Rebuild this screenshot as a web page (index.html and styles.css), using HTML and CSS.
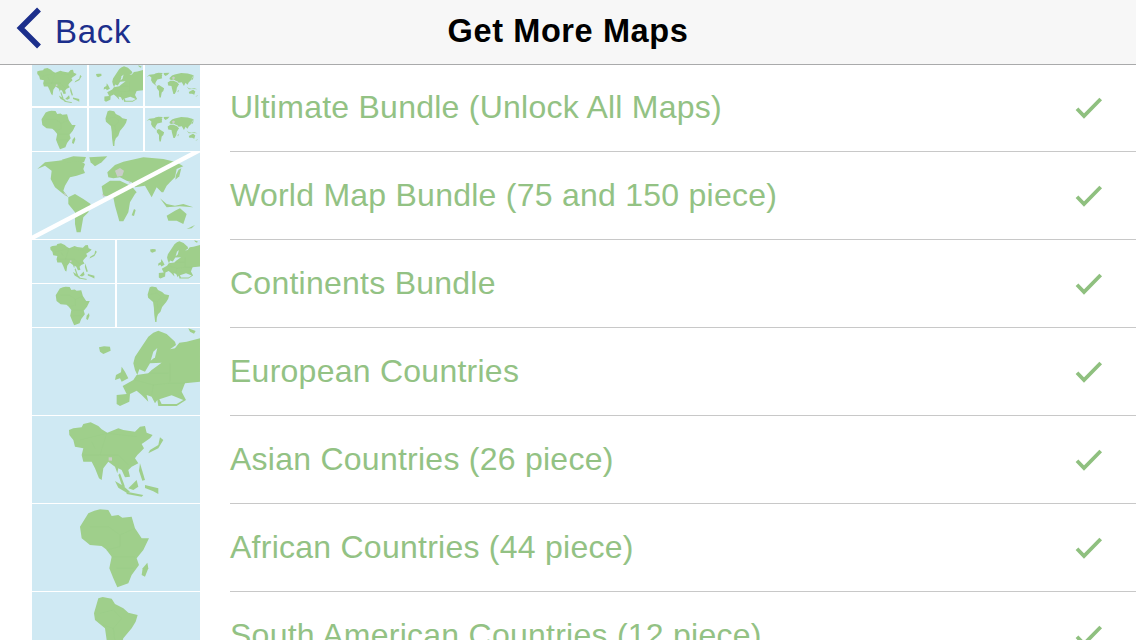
FILE: index.html
```html
<!DOCTYPE html>
<html lang="en">

<head>
    <meta charset="UTF-8">
    <meta name="viewport" content="width=device-width, initial-scale=1.0">
    <title>Get More Maps</title>
    <link rel="stylesheet" href="styles.css">
</head>

<body>
    <svg class="sprite" aria-hidden="true">
        <defs>
            <!-- map shapes are traced in the 3x crop coordinates, hence the scale -->
            <g id="africa" transform="translate(-12,-4) scale(.3333)">
                <path d="M205 40L223 32L240 28L265 30L275 48L295 45L307 53L335 50L345 85L365 115H387L370 150L350 175L357 195L335 225L325 250L292 262L280 235L268 205L275 170L258 148L245 138L210 135L185 115L180 80Z"/>
                <path d="M382 188L385 205L375 230L365 225L368 205Z"/>
                <path class="border" d="M210 80H265L300 105V140L260 150M300 105L345 85M275 170H345M290 205H340"/>
            </g>
            <g id="samerica" transform="translate(-12,-92) scale(.3333)">
                <path d="M222 340L235 295L248 291L275 296L285 312L310 325L325 338L353 345L347 365L335 385L310 415L300 445L285 460L278 480L276 507L268 507L262 460L260 420L255 385L225 360Z"/>
                <path class="border" d="M240 340L280 330L305 355L280 385L250 375M280 385L285 425"/>
            </g>
            <g id="europe" transform="translate(-12,-8) scale(.3333)">
                <path d="M340 130L345 110L365 80L385 50L400 38L415 32L440 42L465 65L468 75L450 88L465 85L478 68L500 65L540 55V185L495 190L485 215L498 240L470 258L415 258L412 240L405 250L395 230L380 225L385 245L365 225L350 212L330 222L328 245L300 258L290 252V225L320 222L308 198L340 180L350 165L385 160L395 150L425 128L390 130L375 155L358 148L352 165L345 150Z"/>
                <path d="M237 82L252 79L270 80L272 92L250 102L240 95Z"/>
                <path d="M305 140L315 155L325 175L305 185L300 175L285 180L288 165L303 157Z"/>
                <path d="M505 25L527 33L522 41L510 35Z"/>
                <path class="sea" d="M418 238L455 226L490 240L470 252L425 252Z"/>
                <path class="sea" d="M392 122L400 95L412 84L405 112Z"/>
                <path class="border" d="M345 180L400 195L445 190L495 190M400 195L395 225M450 130V185M385 160H445"/>
            </g>
            <g id="asia" transform="translate(-12,-96) scale(.3333)">
                <path d="M147 330L160 325L185 322L190 312L212 307L235 318L245 328L262 338L295 325L310 330L345 335L360 320L375 318L380 338L398 345L390 355L375 365L365 372L372 385L362 395L352 405L345 415L355 430L335 440L325 450L330 470L315 472L305 450L295 445L292 460L285 440L265 425L250 445L245 480L237 475L225 445L215 425L190 425L185 405L190 385L165 380L160 360L148 345Z"/>
                <path d="M420 352L430 360L415 385L385 400L390 390L415 375Z"/>
                <path d="M285 483L310 498L330 515L320 518L295 503Z"/>
                <path d="M325 505L350 480L355 500L340 510Z"/>
                <path d="M320 515L370 525L365 530L320 522Z"/>
                <path d="M360 430L375 480L367 482L357 452Z"/>
                <path d="M375 495L415 505V522L400 514L375 504Z"/>
                <path d="M300 460L315 500H307L295 465Z"/>
                <path class="grey" d="M266 412H276V422H266Z"/>
                <path class="border" d="M180 360L260 340L350 350M260 340L240 405M190 405H240M240 405H295L325 435M215 365L225 385"/>
            </g>
            <g id="world" transform="translate(-12,-3) scale(.3333)">
                <path d="M52 60L75 40L115 35L150 30L165 25L195 45L190 60L195 72L170 80L150 85L135 110L130 125L145 145L130 135L105 115L92 90L95 65L75 50Z"/>
                <path d="M125 32L160 22L198 24L192 40L165 38L140 40Z"/>
                <path d="M208 25L262 22L245 40L225 52L212 40Z"/>
                <path d="M145 145L165 135L190 150L212 165L205 190L190 205L182 250H170L165 225V190L145 165Z"/>
                <path d="M262 70L285 48L310 38L370 25L430 30L470 40L490 52L470 60L465 85L450 100L440 110L430 130H425L410 115L395 145L375 110L345 115L335 100L320 95L300 85L280 88L265 85Z"/>
                <path d="M476 62L484 58L478 82L466 92L468 78Z"/>
                <path d="M245 112L270 95H300L335 112L350 130L345 135L330 160L325 190L310 217H298L285 170L280 145L250 140Z"/>
                <path d="M342 180L347 183L342 201L335 199Z"/>
                <path d="M440 200L465 185L480 178L500 195L490 225L470 215L445 215Z"/>
                <path d="M420 148L440 165L465 170L490 165L520 175L480 172L440 175Z"/>
                <path d="M500 240L525 228L515 238Z"/>
                <path class="grey" d="M285 65L300 57L312 65L307 80L292 83ZM245 132L255 142L250 145ZM325 95L333 100L328 103ZM130 130L140 138L135 141Z"/>
            </g>
        </defs>
    </svg>

    <header class="nav-bar">
        <a class="back-link">
            <svg class="back-icon" viewBox="0 0 48 64"><path d="M39 9.500L20.500 28L39 46.500"/></svg>
            <span>Back</span>
        </a>
        <h1 class="nav-title">Get More Maps</h1>
    </header>

    <main class="map-list">
        <div class="map-row">
            <div class="thumb thumb-bundle">
                <svg viewBox="0 0 168 87" preserveAspectRatio="xMidYMid slice"><use href="#asia"/></svg>
                <svg viewBox="0 0 168 87" preserveAspectRatio="xMaxYMid slice"><use href="#europe"/></svg>
                <svg viewBox="0 0 168 87" preserveAspectRatio="xMidYMid meet"><use href="#world"/></svg>
                <svg viewBox="0 0 168 87" preserveAspectRatio="xMidYMid slice"><use href="#africa"/></svg>
                <svg viewBox="0 0 168 87" preserveAspectRatio="xMidYMid slice"><use href="#samerica"/></svg>
                <svg viewBox="0 0 168 87" preserveAspectRatio="xMidYMid meet"><use href="#world"/></svg>
            </div>
            <div class="row-body">
                <span class="row-label">Ultimate Bundle (Unlock All Maps)</span>
                <svg class="check" viewBox="0 0 30 24"><path d="M3 12.800L10 20L26.700 3"/></svg>
            </div>
        </div>

        <div class="map-row">
            <div class="thumb">
                <svg viewBox="0 0 168 87">
                    <use href="#world"/>
                    <path class="slash" d="M-2 87L170 -3"/>
                </svg>
            </div>
            <div class="row-body">
                <span class="row-label">World Map Bundle (75 and 150 piece)</span>
                <svg class="check" viewBox="0 0 30 24"><path d="M3 12.800L10 20L26.700 3"/></svg>
            </div>
        </div>

        <div class="map-row">
            <div class="thumb thumb-continents">
                <svg viewBox="0 0 168 87"><use href="#asia"/></svg>
                <svg viewBox="0 0 168 87"><use href="#europe"/></svg>
                <svg viewBox="0 0 168 87"><use href="#africa"/></svg>
                <svg viewBox="0 0 168 87"><use href="#samerica"/></svg>
            </div>
            <div class="row-body">
                <span class="row-label">Continents Bundle</span>
                <svg class="check" viewBox="0 0 30 24"><path d="M3 12.800L10 20L26.700 3"/></svg>
            </div>
        </div>

        <div class="map-row">
            <div class="thumb">
                <svg viewBox="0 0 168 87"><use href="#europe"/></svg>
            </div>
            <div class="row-body">
                <span class="row-label">European Countries</span>
                <svg class="check" viewBox="0 0 30 24"><path d="M3 12.800L10 20L26.700 3"/></svg>
            </div>
        </div>

        <div class="map-row">
            <div class="thumb">
                <svg viewBox="0 0 168 87"><use href="#asia"/></svg>
            </div>
            <div class="row-body">
                <span class="row-label">Asian Countries (26 piece)</span>
                <svg class="check" viewBox="0 0 30 24"><path d="M3 12.800L10 20L26.700 3"/></svg>
            </div>
        </div>

        <div class="map-row">
            <div class="thumb">
                <svg viewBox="0 0 168 87"><use href="#africa"/></svg>
            </div>
            <div class="row-body">
                <span class="row-label">African Countries (44 piece)</span>
                <svg class="check" viewBox="0 0 30 24"><path d="M3 12.800L10 20L26.700 3"/></svg>
            </div>
        </div>

        <div class="map-row">
            <div class="thumb">
                <svg viewBox="0 0 168 87"><use href="#samerica"/></svg>
            </div>
            <div class="row-body">
                <span class="row-label">South American Countries (12 piece)</span>
                <svg class="check" viewBox="0 0 30 24"><path d="M3 12.800L10 20L26.700 3"/></svg>
            </div>
        </div>
    </main>
</body>

</html>
```

FILE: styles.css
```css
body {
    font-family: "Liberation Sans", Arial, sans-serif;
    margin: 0;
    padding: 0;
    height: 640px;
    overflow: hidden;
    background-color: #fff;
}

.sprite {
    display: block;
    width: 0;
    height: 0;
}

.nav-bar {
    display: grid;
    grid-template-columns: 1fr auto 1fr;
    align-items: center;
    height: 64px;
    background-color: #f7f7f7;
    border-bottom: 1px solid #a9aaab;
}

.back-link {
    display: flex;
    align-items: center;
    color: #1c2f8c;
    font-size: 33px;
    letter-spacing: .7px;
}

.back-icon {
    width: 48px;
    height: 64px;
    margin-right: 7px;
    fill: none;
    stroke: #1c2f8c;
    stroke-width: 5.500;
}

.nav-title {
    margin: 0 0 2px;
    font-size: 32.500px;
    font-weight: bold;
    letter-spacing: .6px;
    color: #000;
}

.map-row {
    display: flex;
    height: 88px;
    padding-left: 32px;
}

.map-row:first-child {
    height: 87px;
}

.map-row:first-child .row-body {
    padding-bottom: 1px;
}

.thumb {
    width: 168px;
    flex-shrink: 0;
    margin-bottom: 1px;
}

.thumb svg {
    display: block;
    width: 100%;
    height: 100%;
    background-color: #cfe9f3;
    fill: #9fcf8b;
}

.thumb-bundle {
    display: grid;
    grid-template-columns: repeat(3, 1fr);
    grid-template-rows: 41px 43px;
    gap: 2px;
}

.thumb-continents {
    display: grid;
    grid-template-columns: repeat(2, 1fr);
    grid-template-rows: repeat(2, 1fr);
    gap: 1px 2px;
}

.border {
    fill: none;
    stroke: #97ca85;
    stroke-width: 1;
}

.sea {
    fill: #cfe9f3;
}

.grey {
    fill: #c9cdc9;
}

.slash {
    fill: none;
    stroke: #fff;
    stroke-width: 4.500;
}

.row-body {
    flex: 1;
    display: flex;
    align-items: center;
    justify-content: space-between;
    margin-left: 30px;
    padding-right: 32px;
    border-bottom: 1px solid #c8c8c8;
}

.row-label {
    font-size: 32px;
    letter-spacing: .25px;
    color: #93c284;
}

.check {
    width: 30px;
    height: 24px;
    fill: none;
    stroke: #8fc07f;
    stroke-width: 3.800;
}
```
